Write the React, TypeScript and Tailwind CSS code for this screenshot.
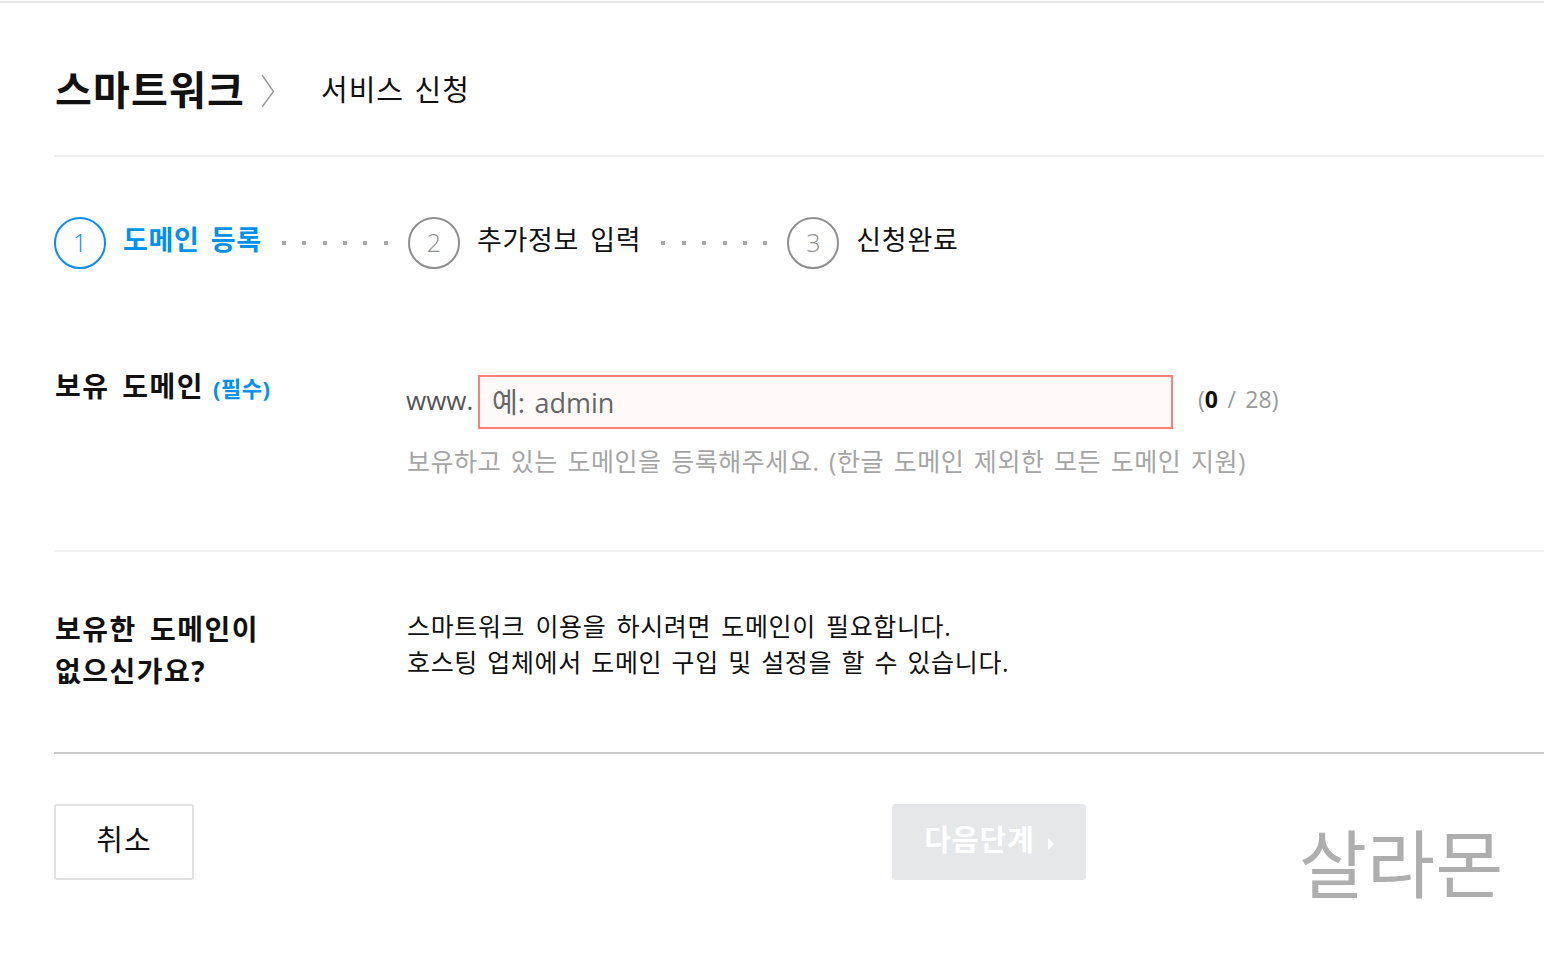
const font = "font-['Open_Sans','Noto_Sans_CJK_KR',sans-serif]"

function StepCircle({ n, active }: { n: number; active?: boolean }) {
  return (
    <span
      className={
        "w-[52px] h-[52px] rounded-full border-2 flex items-center justify-center shrink-0 text-[25px] font-light bg-white " +
        (active ? "border-[#0b8cf0] text-[#0b8cf0]" : "border-[#8f8f8f] text-[#8f8f8f]")
      }
    >
      {n}
    </span>
  )
}

function StepLabel({ children, active }: { children: string; active?: boolean }) {
  return (
    <span
      className={
        "ml-[17px] mt-[3px] text-[27px] leading-[40px] tracking-[0.7px] [word-spacing:3.5px] " +
        (active ? "font-bold text-[#0091ea]" : "")
      }
    >
      {children}
    </span>
  )
}

function Dots() {
  return (
    <div className="flex items-center h-[52px] gap-[16.4px] ml-[20px] mr-[20px]">
      {[0, 1, 2, 3, 4, 5].map((i) => (
        <span key={i} className="w-[4px] h-[4px] bg-[#a8a8a8]" />
      ))}
    </div>
  )
}

export default function App() {
  return (
    <div className={font + " relative h-[960px] w-[1544px] overflow-hidden bg-white text-[#111]"}>
      <div className="h-[2px] bg-[#e6e6e6] mt-[1px]" />

      <div className="pl-[54px]">
        {/* Title */}
        <div className="flex items-center h-[154px] pt-[22px] border-b-2 border-[#eeeeee]">
          <h1 className="ml-[1px] text-[40px] font-bold tracking-[1.2px]">스마트워크</h1>
          <svg width="16" height="36" viewBox="0 0 16 36" className="ml-[15px] mt-[2px] shrink-0" fill="none">
            <path d="M2 2 L13.5 18.5 L2 34" stroke="#999" strokeWidth="1.4" />
          </svg>
          <span className="ml-[45px] text-[29px] tracking-[1px] [word-spacing:2px]">서비스 신청</span>
        </div>

        {/* Steps */}
        <div className="flex items-start pt-[60px] h-[218px]">
          <StepCircle n={1} active />
          <StepLabel active>도메인 등록</StepLabel>
          <Dots />
          <StepCircle n={2} />
          <StepLabel>추가정보 입력</StepLabel>
          <Dots />
          <StepCircle n={3} />
          <StepLabel>신청완료</StepLabel>
        </div>

        {/* Domain */}
        <div className="flex h-[177px] border-b-2 border-[#f2f2f2]">
          <div className="w-[352px] shrink-0 flex items-center self-start h-[22px] pl-[1px]">
            <span className="text-[28px] leading-[22px] font-bold tracking-[1.5px] [word-spacing:4px]">보유 도메인</span>
            <span className="ml-[9px] mt-[4px] text-[22px] leading-[22px] font-bold text-[#0091ea] tracking-[0.5px]">(필수)</span>
          </div>
          <div>
            <div className="flex items-center">
              <span className="text-[26px] text-[#555] w-[72px] -mt-[3px]">www.</span>
              <div className="w-[695px] h-[54px] border-2 border-[#fb8078] bg-[#fffafa] flex items-center pl-[12px] text-[28px] text-[#666] [word-spacing:2px]">
                <span>
                  예: <span className="text-[27px]">admin</span>
                </span>
              </div>
              <span className="ml-[25px] -mt-[5px] text-[23px] text-[#999] [word-spacing:3.5px]">
                (<b className="text-[#111]">0</b> / 28)
              </span>
            </div>
            <p className="mt-[14px] pl-[1px] text-[25px] text-[#a5a5a5] tracking-[0.55px] [word-spacing:2.5px]">
              보유하고 있는 도메인을 등록해주세요. (한글 도메인 제외한 모든 도메인 지원)
            </p>
          </div>
        </div>

        {/* Help */}
        <div className="flex h-[202px] border-b-2 border-[#cccccc] pt-[56px]">
          <div className="w-[352px] shrink-0 pl-[1px] text-[28px] font-bold leading-[42px] tracking-[1.5px] [word-spacing:4.5px]">
            보유한 도메인이
            <br />
            없으신가요?
          </div>
          <div className="pl-[1px] text-[25px] leading-[36px] tracking-[0.65px]">
            <p className="[word-spacing:3px]">스마트워크 이용을 하시려면 도메인이 필요합니다.</p>
            <p className="[word-spacing:2.2px]">호스팅 업체에서 도메인 구입 및 설정을 할 수 있습니다.</p>
          </div>
        </div>

        {/* Buttons */}
        <div className="flex mt-[50px]">
          <button className="w-[140px] h-[76px] border-2 border-[#e2e2e2] rounded-[3px] text-[29px] tracking-[1px] pb-[4px]">취소</button>
          <button className="ml-[698px] w-[194px] h-[76px] pb-[4px] bg-[#e6e7e9] rounded-[3px] text-white text-[29px] font-bold tracking-[1px] flex items-center justify-center">
            다음단계
            <svg width="6" height="12" viewBox="0 0 6 12" className="ml-[13px] mt-[7px]">
              <path d="M0 0 L6 6 L0 12 Z" fill="#fff" />
            </svg>
          </button>
        </div>
      </div>

      {/* Watermark */}
      <span className="absolute left-[1299px] top-[814px] text-[74px] leading-[100px] text-[#aeaeae]">살라몬</span>
    </div>
  )
}
